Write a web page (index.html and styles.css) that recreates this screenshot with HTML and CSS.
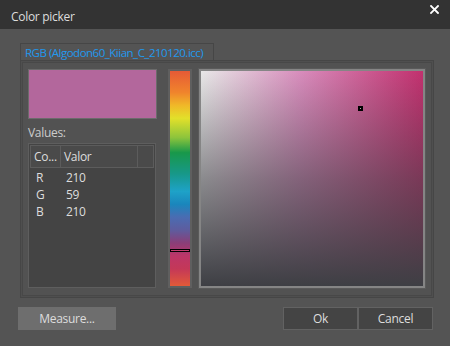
FILE: index.html
```html
<!DOCTYPE html>
<html lang="en">
<head>
    <meta charset="UTF-8">
    <title>Color picker</title>
    <link rel="stylesheet" href="styles.css">
</head>
<body>
    <div class="window">
        <header class="titlebar">
            <span class="title">Color picker</span>
            <button class="close" aria-label="Close">
                <svg width="9" height="9" viewBox="0 0 9 9"><path d="M1 1 L8 8 M8 1 L1 8" stroke="#fff" stroke-width="1.8" stroke-linecap="square"/></svg>
            </button>
        </header>

        <div class="tabs">
            <div class="tab active">RGB (Algodon60_Kiian_C_210120.icc)</div>
        </div>

        <section class="pane">
            <div class="left">
                <div class="swatch"></div>
                <div class="values-label">Values:</div>
                <div class="table">
                    <div class="thead">
                        <div class="th col-name">Co...</div>
                        <div class="th col-value">Valor</div>
                        <div class="th col-rest"></div>
                    </div>
                    <div class="tbody">
                        <div class="row"><span class="col-name">R</span><span class="col-value">210</span></div>
                        <div class="row"><span class="col-name">G</span><span class="col-value">59</span></div>
                        <div class="row"><span class="col-name">B</span><span class="col-value">210</span></div>
                    </div>
                </div>
            </div>

            <div class="hue">
                <div class="hue-marker"></div>
            </div>

            <div class="sv">
                <div class="sv-marker"></div>
            </div>
        </section>

        <footer class="actions">
            <button class="btn measure">Measure...</button>
            <div class="btn-pair">
                <button class="btn">Ok</button>
                <button class="btn">Cancel</button>
            </div>
        </footer>
    </div>
</body>
</html>
```

FILE: styles.css
```css
:root {
    --bg: #545454;
    --bg-title: #333333;
    --bg-pane: #525252;
    --bg-list: #444444;
    --text: #dddddd;
    --accent: #2299ee;
    --line-dark: #464646;
    --line-light: #666666;
}

* {
    box-sizing: border-box;
}

body {
    margin: 0;
    background-color: var(--bg);
    color: var(--text);
    font-family: "Open Sans", "Noto Sans", sans-serif;
    font-size: 12px;
    letter-spacing: -0.3px;
}

.window {
    width: 450px;
    height: 346px;
    display: flex;
    flex-direction: column;
}

.titlebar {
    height: 29px;
    background-color: var(--bg-title);
    display: flex;
    align-items: center;
    justify-content: space-between;
    padding: 0 11px 0 11px;
}

.title {
    margin-top: 4px;
}

.close {
    background: none;
    border: none;
    padding: 0;
    width: 9px;
    height: 9px;
    align-self: flex-start;
    margin-top: 5px;
    display: flex;
}

.tabs {
    display: flex;
    padding: 14px 0 0 20px;
}

.tab {
    height: 17px;
    width: 194px;
    border: 1px solid var(--line-dark);
    border-bottom: none;
    padding-left: 4px;
    line-height: 17px;
    font-size: 11.5px;
    letter-spacing: -0.5px;
    color: var(--accent);
    white-space: nowrap;
}

.pane {
    margin: 0 16px 0 20px;
    height: 238px;
    border: 1px solid var(--line-dark);
    box-shadow: inset 0 0 0 1px #4f4f4f, inset 0 0 0 2px #484848;
    background-color: var(--bg-pane);
    padding: 8px 8px 9px 7px;
    display: flex;
}

.left {
    width: 129px;
    display: flex;
    flex-direction: column;
}

.swatch {
    height: 50px;
    background-color: #b3679c;
    border: 1px solid #6b6b6b;
}

.values-label {
    margin-top: 6px;
    line-height: 16px;
    margin-bottom: 2px;
    color: #cccccc;
}

.table {
    flex: 1;
    border: 1px solid #5e5e5e;
    background-color: var(--bg-list);
    padding: 1px;
    margin-right: 1px;
}

.thead {
    display: flex;
    height: 23px;
    background-color: #4a4a4a;
}

.th {
    border: 1px solid #5c5c5c;
    border-left: none;
    line-height: 21px;
    padding-left: 3px;
}

.th:first-child {
    border-left: 1px solid #5c5c5c;
}

.thead .col-name {
    width: 31px;
}

.thead .col-value {
    width: 77px;
}

.thead .col-rest {
    flex: 1;
}

.tbody {
    padding-top: 1px;
}

.row {
    display: flex;
    line-height: 17px;
}

.row .col-name {
    width: 36px;
    padding-left: 6px;
}

.hue {
    position: relative;
    width: 24px;
    margin-left: 11px;
    border: 2px solid #5f5f5f;
    background: linear-gradient(to bottom,
        #e65a36 0%,
        #f0842c 10%,
        #f0b828 16%,
        #e2e02a 22%,
        #8cc43c 31%,
        #18984a 38%,
        #17988a 48%,
        #1ea2c8 56%,
        #1a86bc 62%,
        #4a6cb2 68%,
        #5e5c9e 74%,
        #8a3e78 80%,
        #bc3668 86%,
        #c43858 92%,
        #e25a38 100%);
}

.hue-marker {
    position: absolute;
    left: 0;
    right: 0;
    top: 178px;
    height: 3px;
    border: 1px solid #000;
    background-color: #c24070;
}

.sv {
    position: relative;
    flex: 1;
    margin-left: 7px;
    border: 2px solid #858585;
    box-shadow: 0 0 0 1px #5a5a5a;
    background:
        linear-gradient(to bottom, rgba(62, 63, 68, 0) 0%, rgba(62, 63, 68, 0.55) 50%, rgba(62, 63, 68, 1) 100%),
        linear-gradient(to right, #e8e8e8 0%, #d88cbc 45%, #c2306e 100%);
}

.sv-marker {
    position: absolute;
    left: 157px;
    top: 35px;
    width: 5px;
    height: 5px;
    border: 2px solid #000;
    background-color: #aaaaaa;
}

.actions {
    display: flex;
    justify-content: space-between;
    padding: 9px 17px 0 18px;
}

.btn {
    height: 23px;
    font-family: inherit;
    font-size: inherit;
    letter-spacing: inherit;
    color: var(--text);
    background-color: #444444;
    border: 1px solid #626262;
    padding: 0;
}

.measure {
    width: 98px;
    background-color: #6e6e6e;
    border-color: #6e6e6e;
}

.btn-pair {
    display: flex;
}

.btn-pair .btn {
    width: 75px;
}
```
